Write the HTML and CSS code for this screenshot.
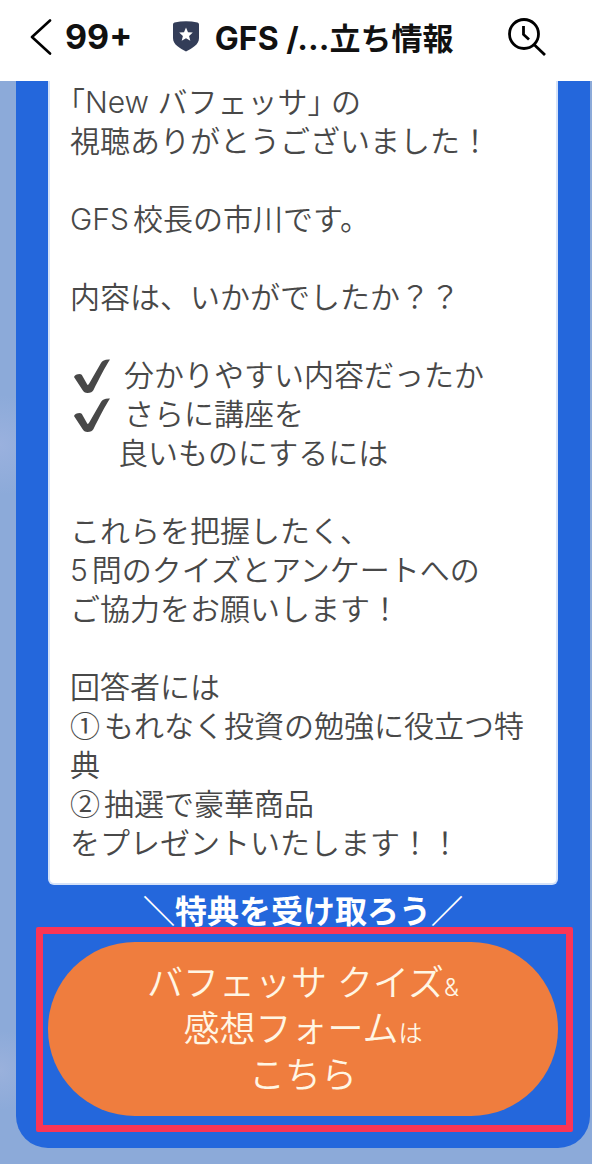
FILE: index.html
```html
<!DOCTYPE html>
<html lang="ja">

<head>
    <meta charset="UTF-8">
    <meta name="viewport" content="width=device-width, initial-scale=1">
    <title>GFS お役立ち情報</title>
    <link rel="stylesheet" href="styles.css">
</head>

<body>
    <header class="header">
        <a class="back" href="#" aria-label="戻る">
            <svg class="backIcon" viewBox="0 0 22 36">
                <path d="M20 1.5 L2 18 L20 34.5" fill="none" stroke="#000" stroke-width="2.600" stroke-linecap="round" stroke-linejoin="round" />
            </svg>
            <span>99+</span>
        </a>
        <h1 class="title">
            <svg class="shield" viewBox="0 0 26 31">
                <path d="M1.5 1.5 Q13 -1 24.500 1.500 Q26 2 26 3.500 V17 C26 24 19 27 13 30.500 C7 27 0 24 0 17 V3.500 Q0 2 1.500 1.500 Z" fill="#333d58" />
                <path d="M13 6.500 L15 11.200 L19.800 11.600 L16.100 14.900 L17.300 19.800 L13 17.200 L8.700 19.800 L9.900 14.900 L6.200 11.600 L11 11.200 Z" fill="#fff" />
            </svg>
            <span>GFS /...<span class="titleJa">立ち情報</span></span>
        </h1>
        <button class="search" type="button" aria-label="検索">
            <svg class="searchIcon" viewBox="0 0 38 38">
                <g fill="none" stroke="#000" stroke-width="2.800">
                    <circle cx="16" cy="16" r="14.500" />
                    <path d="M15.500 8 V16.500 L21 21.500" />
                    <path d="M26 26.500 L37 37" />
                </g>
            </svg>
        </button>
    </header>

    <main class="bubble">
        <div class="card">
            <p><span class="bracket">「</span>New バフェッサ<span class="bracket">」</span> の<br>視聴ありがとうございました！</p>
            <p><span class="spaced">GFS</span>校長の市川です。</p>
            <p>内容は、いかがでしたか？？</p>
            <ul class="checks">
                <li>
                    <svg class="check" viewBox="0 0 36 34">
                        <path d="M0 18 Q1 15 6 15 Q8 15 9 18 L13.500 26 Q14.500 26 15.500 24 L27 4 Q29 0 36 0.500 C31 8 25 20 19.500 31 Q18 34 13.500 34 Q10 34 8.500 31 Z" fill="#484848" />
                    </svg>
                    <span>分かりやすい内容だったか</span>
                </li>
                <li>
                    <svg class="check" viewBox="0 0 36 34">
                        <path d="M0 18 Q1 15 6 15 Q8 15 9 18 L13.500 26 Q14.500 26 15.500 24 L27 4 Q29 0 36 0.500 C31 8 25 20 19.500 31 Q18 34 13.500 34 Q10 34 8.500 31 Z" fill="#484848" />
                    </svg>
                    <span>さらに講座を</span>
                </li>
                <li class="continued">良いものにするには</li>
            </ul>
            <p>これらを把握したく、<br><span class="spaced">5</span>問のクイズとアンケートへの<br>ご協力をお願いします！</p>
            <p>回答者には<br><span class="spaced number">①</span>もれなく投資の勉強に役立つ特典<br><span class="spaced number">②</span>抽選で豪華商品<br>をプレゼントいたします！！</p>
        </div>
        <p class="label">＼特典を受け取ろう／</p>
        <div class="marked">
            <button class="cta" type="button">バフェッサ クイズ<small>&amp;</small><br>感想フォーム<small>は</small><br>こちら</button>
        </div>
    </main>
</body>

</html>
```

FILE: styles.css
```css
* {
    box-sizing: border-box;
}

body {
    margin: 0;
    min-height: 100vh;
    padding-bottom: 16px;
    font-family: Inter, "Noto Sans CJK JP", sans-serif;
    color: #484848;
    background:
        radial-gradient(circle at 0 445px, #9ab1de, transparent 50px),
        radial-gradient(circle at 0 1070px, #9ab1dc, transparent 40px),
        #8caad9;
}

p {
    margin: 0;
}

.header {
    position: sticky;
    top: 0;
    z-index: 2;
    display: flex;
    align-items: center;
    justify-content: space-between;
    height: 81px;
    padding: 0 46px 8px 30px;
    background: #fff;
    color: #111;
}

.back {
    display: flex;
    align-items: center;
    gap: 13px;
    color: inherit;
    font-size: 34px;
    font-weight: 700;
    text-decoration: none;
}

.backIcon {
    width: 22px;
    height: 36px;
}

.title {
    display: flex;
    align-items: center;
    gap: 16px;
    margin: 0 14px 0 0;
    font-size: 32px;
    font-weight: 700;
    white-space: nowrap;
}

.titleJa {
    font-size: 31px;
}

.shield {
    width: 26px;
    height: 31px;
}

.search {
    padding: 0;
    border: 0;
    background: none;
}

.searchIcon {
    display: block;
    width: 38px;
    height: 38px;
}

.bubble {
    margin: 0 2px 0 16px;
    padding: 0 32px 32px;
    border-radius: 0 0 32px 32px;
    background: #2467dc;
}

.card {
    padding: 2px 20px 20px;
    border: solid 2px #d5e2f8;
    border-top: 0;
    border-radius: 0 0 6px 6px;
    background: #fff;
    font-size: 30px;
    font-weight: 350;
    line-height: 39px;
}

.card p,
.checks {
    margin: 0 0 39px;
}

.card p:last-child {
    margin-bottom: 0;
}

.bracket {
    font-feature-settings: "halt";
}

.spaced {
    margin-right: 4px;
}

.number {
    display: inline-block;
    font-family: "Noto Sans CJK JP", sans-serif;
    line-height: 30px;
}

.checks {
    padding: 0;
    list-style: none;
}

.checks li {
    display: flex;
    align-items: center;
    height: 39px;
}

.check {
    flex: none;
    width: 36px;
    height: 34px;
    margin: 0 14px 0 4px;
}

.checks .continued {
    padding-left: 48px;
}

.label {
    margin-bottom: 3px;
    color: #fff;
    font-size: 32px;
    font-weight: 700;
    line-height: 54px;
    text-align: center;
    white-space: nowrap;
}

.marked {
    position: relative;
}

/* red frame drawn over the bubble */
.marked::after {
    content: "";
    position: absolute;
    inset: -15px -15px -16px -12px;
    border: solid 7px #fb3555;
    border-radius: 2px;
    pointer-events: none;
}

.cta {
    display: block;
    width: 100%;
    padding: 18px 0;
    border: 0;
    border-radius: 87px;
    background: #ef7d3e;
    color: #fff6e4;
    font-family: inherit;
    font-size: 36px;
    font-weight: 350;
    line-height: 46px;
}

.cta small {
    font-size: 24px;
    line-height: 24px;
}
```
